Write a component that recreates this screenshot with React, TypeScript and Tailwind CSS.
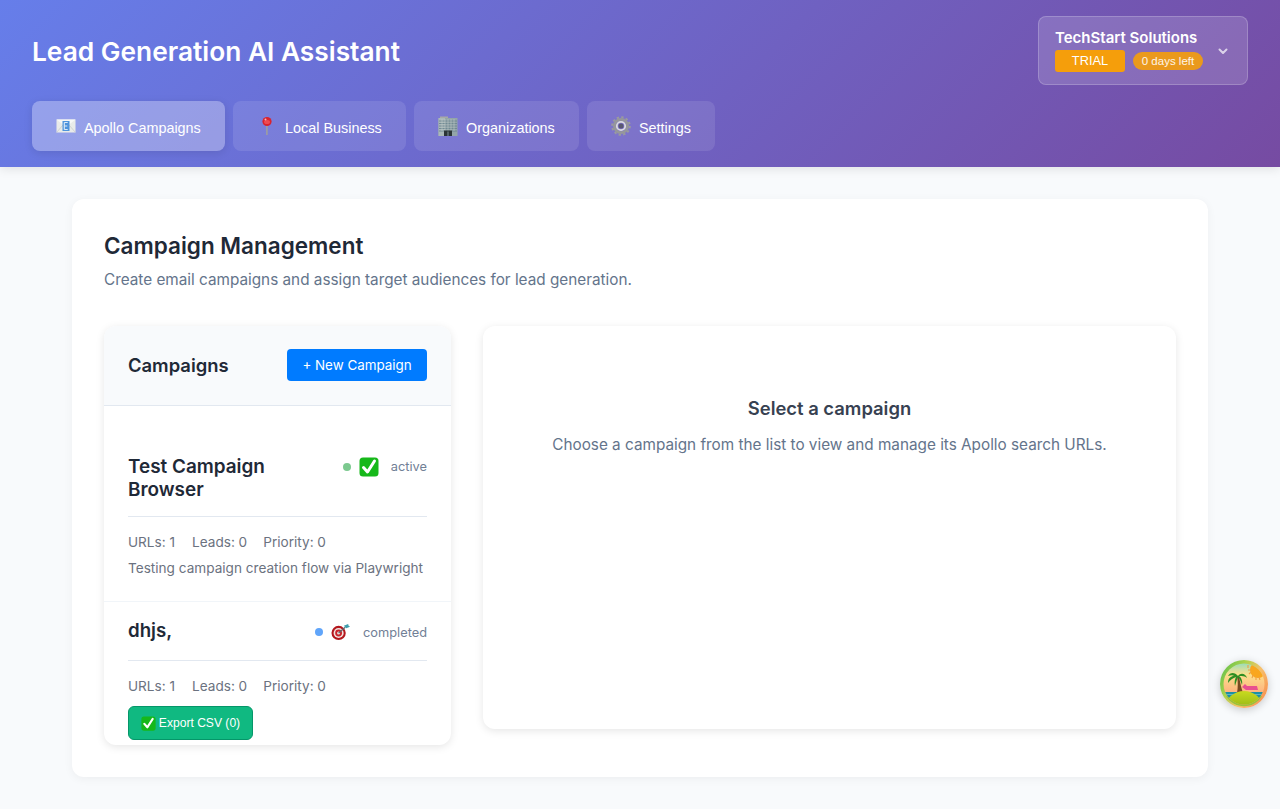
import React from 'react';

const MailIcon = () => (
  <svg width="20" height="20" viewBox="0 0 20 20">
    <rect x="0.500" y="3.500" width="19" height="13" fill="#e9ebe9" />
    <path d="M0.500 3.500L10 11l9.500-7.500z" fill="#f7f8f7" />
    <path d="M0.500 16.500L7 9M19.500 16.500L13 9" stroke="#c6c9c6" strokeWidth="0.700" />
    <rect x="6.500" y="5" width="7" height="10" fill="#4f94dc" />
    <path d="M8.300 6.500h3.400M8.300 10h3M8.300 13.500h3.400M8.300 6.500v7" fill="none" stroke="#dcebf8" strokeWidth="1.100" />
  </svg>
);

const PinIcon = () => (
  <svg width="20" height="20" viewBox="0 0 20 20">
    <rect x="9" y="8" width="1.800" height="11" fill="#9a9aa6" />
    <circle cx="10" cy="5.500" r="4.600" fill="#d9232e" />
    <ellipse cx="10" cy="6" rx="3" ry="2" fill="#ee4a52" />
    <circle cx="8.500" cy="3.600" r="1" fill="#f9b3b7" />
  </svg>
);

const BuildingIcon = () => (
  <svg width="20" height="20" viewBox="0 0 20 20">
    <rect x="2" y="0.500" width="8" height="2" fill="#a7a9a6" />
    <rect x="0.500" y="2" width="19" height="18" fill="#93a5a8" />
    <rect x="0.500" y="2" width="6.500" height="18" fill="#aab8b8" />
    <path d="M1 5h18M1 7.500h18M1 10h18M1 12.500h18M1 15h18" stroke="#6d8791" strokeWidth="0.900" />
    <path d="M4 3v12M7 3v12M10 3v12M13 3v12M16 3v12" stroke="#c1cbcb" strokeWidth="0.600" />
    <rect x="6" y="14.500" width="8" height="5.500" fill="#2b3436" />
    <rect x="9.500" y="15.500" width="1" height="4.500" fill="#7f9298" />
  </svg>
);

const GearIcon = () => (
  <svg width="20" height="20" viewBox="0 0 20 20">
    <circle cx="10" cy="10" r="8.800" fill="none" stroke="#9a9b9f" strokeWidth="2" strokeDasharray="2.300 2.308" />
    <circle cx="10" cy="10" r="6.600" fill="none" stroke="#96979b" strokeWidth="2.800" />
    <circle cx="10" cy="10" r="4.200" fill="none" stroke="#dcdcde" strokeWidth="1.800" />
    <circle cx="10" cy="10" r="2.500" fill="#5a5870" />
  </svg>
);

const CheckIcon = ({ size }: { size: number }) => (
  <svg width={size} height={size} viewBox="0 0 20 20">
    <rect x="0.500" y="0.500" width="19" height="19" rx="3.500" fill="#16b81a" />
    <path d="M4.500 10.500l4 4.500 7-11" fill="none" stroke="#fff" strokeWidth="3" strokeLinecap="round" strokeLinejoin="round" />
  </svg>
);

const DartIcon = () => (
  <svg width="20" height="18" viewBox="0 0 21 18">
    <circle cx="8" cy="10" r="7.500" fill="#b3171d" />
    <circle cx="8" cy="10" r="5.300" fill="#f1e3df" />
    <circle cx="8" cy="10" r="3.600" fill="#c9222a" />
    <circle cx="8" cy="10" r="1.600" fill="#f1e3df" />
    <path d="M8 10l7-6" stroke="#5c6b70" strokeWidth="1.200" />
    <path d="M13.500 2.500l2.500 2.500 4-1.500-1.500-1-.5-2z" fill="#3f9fae" />
  </svg>
);

const IslandBadge = () => (
  <svg width="48" height="48" viewBox="0 0 48 48">
    <defs>
      <linearGradient id="sky" x1="0" y1="0" x2="0" y2="1">
        <stop offset="0" stopColor="#7fdcc4" />
        <stop offset="0.300" stopColor="#fbe08c" />
        <stop offset="0.700" stopColor="#ffb07e" />
        <stop offset="1" stopColor="#ff9a80" />
      </linearGradient>
      <linearGradient id="ring" x1="0" y1="0" x2="1" y2="0.600">
        <stop offset="0" stopColor="#52bb4c" />
        <stop offset="0.400" stopColor="#aad34c" />
        <stop offset="0.700" stopColor="#f6c06c" />
        <stop offset="1" stopColor="#f79a56" />
      </linearGradient>
      <linearGradient id="hill" x1="0" y1="0" x2="0" y2="1">
        <stop offset="0" stopColor="#c9da1f" />
        <stop offset="1" stopColor="#6f9e0c" />
      </linearGradient>
      <clipPath id="inner">
        <circle cx="24" cy="24" r="20.500" />
      </clipPath>
    </defs>
    <circle cx="24" cy="24" r="24" fill="url(#ring)" />
    <path d="M6 36a21 21 0 0 0 36 0z" fill="#96c53a" />
    <g clipPath="url(#inner)">
      <rect width="48" height="48" fill="url(#sky)" />
      <circle cx="38" cy="10" r="8" fill="#f9a61f" />
      <path d="M28 5v3M28 10h3M29 14l2-2M32 18l1-3M36 20v-3M40 20l-1-3" stroke="#ee9f45" strokeWidth="1.100" />
      <rect x="3" y="32" width="42" height="6" fill="#1c90a6" />
      <path d="M3 34.500h42" stroke="#7fc9c9" strokeWidth="0.700" />
      <path d="M22 27l3-3 2 2 10 0 1 4-12 0z" fill="#e8508f" />
      <path d="M17 33c1-6 1-11 0-17l2 0c1 6 2 11 4 17z" fill="#7a4a22" />
      <path d="M18 16c-3-4-8-4-10 0 3-1 5-1 6 0-3 0-6 2-6 7 2-3 5-5 8-6-1 2-2 5-1 9 1-3 2-7 3-9 2 2 3 5 4 8 1-4-1-8-3-9 3 0 6 0 8 2-1-4-6-6-9-2z" fill="#2f8f23" />
      <ellipse cx="24" cy="46" rx="18" ry="15" fill="url(#hill)" />
    </g>
  </svg>
);

const tabs = [
  { label: 'Apollo Campaigns', icon: <MailIcon />, width: 'w-[193px]', active: true },
  { label: 'Local Business', icon: <PinIcon />, width: 'w-[173px]', active: false },
  { label: 'Organizations', icon: <BuildingIcon />, width: 'w-[165px]', active: false },
  { label: 'Settings', icon: <GearIcon />, width: 'w-[128px]', active: false },
];

export default function App() {
  return (
    <div className="min-h-[809px] bg-[#f8fafc] font-['Inter',sans-serif]">
      {/* Header */}
      <header className="h-[167px] bg-[linear-gradient(135deg,#667eea_0%,#764ba2_100%)] px-8 pt-4 shadow-[0_2px_10px_rgba(0,0,0,0.1)]">
        <div className="flex h-[69px] items-center justify-between">
          <h1 className="mt-1 text-[26.3px] font-semibold leading-none text-white">Lead Generation AI Assistant</h1>
          <div className="flex h-[69px] w-[210px] items-center justify-between rounded-lg border border-white/20 bg-white/15 pl-4 pr-[18px]">
            <div>
              <div className="text-[15px] font-semibold leading-[17px] text-white">TechStart Solutions</div>
              <div className="mt-1 flex items-center gap-2 font-['Liberation_Sans',sans-serif]">
                <span className="flex h-[22px] w-[70px] items-center justify-center rounded-[3px] bg-[#f59e0b] text-[12.8px] text-white">TRIAL</span>
                <span className="flex h-[18px] w-[70px] items-center justify-center rounded-full bg-[#f59e0b]/90 pt-[1px] text-[11.5px] text-white/90">0 days left</span>
              </div>
            </div>
            <svg width="12" height="12" viewBox="0 0 12 12" fill="none" stroke="#fff" strokeOpacity="0.7" strokeWidth="2" strokeLinecap="round" strokeLinejoin="round">
              <path d="M2.500 4.500L6 8l3.500-3.500" />
            </svg>
          </div>
        </div>
        <nav className="mt-4 flex gap-2">
          {tabs.map((tab) => (
            <button
              key={tab.label}
              className={`flex h-[50px] items-center gap-2 rounded-lg px-6 font-['Liberation_Sans',sans-serif] text-[14.4px] text-white ${tab.width} ${
                tab.active ? 'bg-white/30 shadow-[0_2px_8px_rgba(0,0,0,0.1)]' : 'bg-white/10'
              }`}
            >
              <span className="block h-5 w-5">{tab.icon}</span>
              <span className="pt-[6px]">{tab.label}</span>
            </button>
          ))}
        </nav>
      </header>

      {/* Main card */}
      <main className="px-[72px] pt-8">
        <section className="h-[578px] rounded-xl bg-white p-8 shadow-[0_2px_10px_rgba(0,0,0,0.05)]">
          <h2 className="text-[22.5px] font-semibold leading-[29px] text-[#1f2937]">Campaign Management</h2>
          <p className="mt-[10px] text-[15.3px] leading-[19px] text-[#64748b]">Create email campaigns and assign target audiences for lead generation.</p>

          <div className="mt-[37px] flex items-start gap-8">
            {/* Campaign list */}
            <div className="h-[419px] w-[347px] shrink-0 overflow-hidden rounded-xl bg-white shadow-[0_2px_8px_rgba(0,0,0,0.1)]">
              <div className="flex h-[80px] items-center justify-between border-b border-[#e2e8f0] bg-[#f8fafc] px-6 pb-[1px]">
                <h3 className="mt-[2px] text-[18.4px] font-semibold text-[#1f2937]">Campaigns</h3>
                <button className="flex h-8 w-[140px] items-center justify-center rounded-[4px] bg-[#007bff] text-[13.4px] text-white">+ New Campaign</button>
              </div>

              <div className="border-b border-[#f1f5f9] px-6 pb-[25px] pt-[52px]">
                <div className="-mt-[1px] flex items-start justify-between border-b border-[#e2e8f0] pb-[14px]">
                  <h4 className="-mt-[2px] mb-[1px] w-[180px] text-[18.9px] font-semibold leading-[23px] text-[#1f2937]">Test Campaign Browser</h4>
                  <div className="flex items-center">
                    <span className="h-2 w-2 rounded-full bg-[#7cc98f]" />
                    <span className="ml-2"><CheckIcon size={20} /></span>
                    <span className="ml-3 text-[12.8px] text-[#718096]">active</span>
                  </div>
                </div>
                <div className="mt-[17px] flex gap-4 text-[13.6px] leading-[17px] text-[#6b7280]">
                  <span className="mr-[1px]">URLs: 1</span>
                  <span>Leads: 0</span>
                  <span>Priority: 0</span>
                </div>
                <p className="mt-[9px] text-[13.6px] leading-4 text-[#6b7280]">Testing campaign creation flow via Playwright</p>
              </div>

              <div className="px-6 pt-[17px]">
                <div className="flex h-[42px] items-start justify-between border-b border-[#e2e8f0]">
                  <h4 className="text-[18.7px] font-semibold leading-[23px] text-[#1f2937]">dhjs,</h4>
                  <div className="flex items-center">
                    <span className="mt-[2px] h-2 w-2 rounded-full bg-[#60a5fa]" />
                    <span className="ml-2 mt-[3px]"><DartIcon /></span>
                    <span className="ml-3 mt-[4px] text-[12.8px] text-[#718096]">completed</span>
                  </div>
                </div>
                <div className="mt-[17px] flex gap-4 text-[13.6px] leading-[17px] text-[#6b7280]">
                  <span className="mr-[1px]">URLs: 1</span>
                  <span>Leads: 0</span>
                  <span>Priority: 0</span>
                </div>
                <button className="mt-[11px] flex h-[34px] w-[125px] items-center justify-center gap-[3px] rounded-md border border-[#059669] bg-[#10b981] font-['Liberation_Sans',sans-serif] text-[12.1px] text-white">
                  <CheckIcon size={15} />
                  <span className="pt-[1px]">Export CSV (0)</span>
                </button>
              </div>
            </div>

            {/* Empty state */}
            <div className="h-[403px] flex-1 rounded-xl bg-white pt-[71px] text-center shadow-[0_2px_8px_rgba(0,0,0,0.1)]">
              <h3 className="text-[18.4px] font-semibold leading-[22px] text-[#374151]">Select a campaign</h3>
              <p className="mt-[16px] text-[15.3px] leading-[19px] text-[#64748b]">Choose a campaign from the list to view and manage its Apollo search URLs.</p>
            </div>
          </div>
        </section>
      </main>

      {/* Floating assistant badge */}
      <div className="fixed left-[1220px] top-[660px] h-12 w-12 rounded-full shadow-[0_2px_8px_rgba(0,0,0,0.2)]">
        <IslandBadge />
      </div>
    </div>
  );
}
